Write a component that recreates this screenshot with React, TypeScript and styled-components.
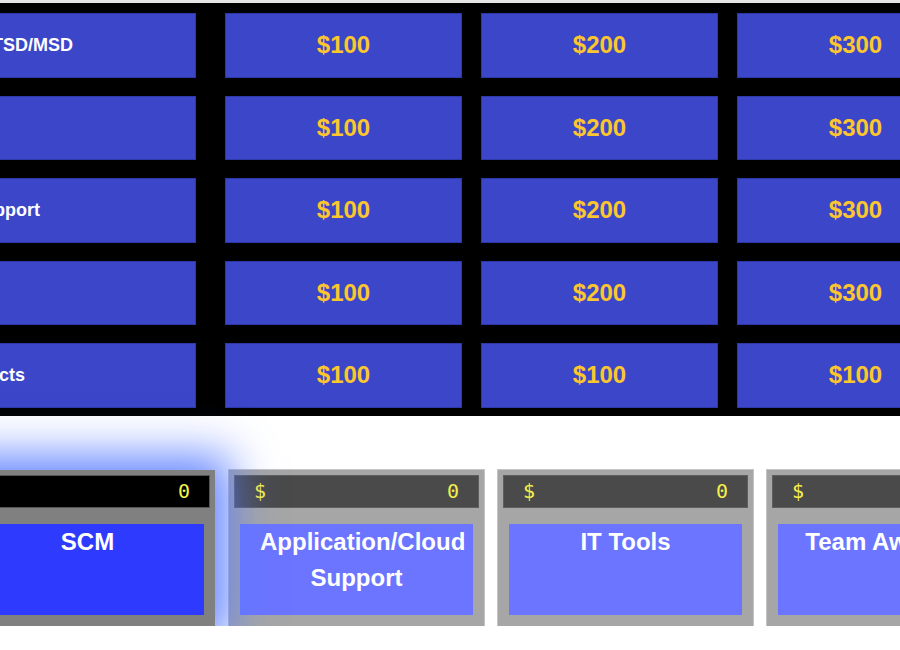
import React from "react";
import styled, { createGlobalStyle } from "styled-components";

const Global = createGlobalStyle`
  html, body {
    margin: 0;
    padding: 0;
    background: #ffffff;
    overflow: hidden;
  }
  body {
    font-family: "Liberation Sans", Arial, sans-serif;
  }
`;

const Page = styled.div`
  border-top: 3px solid #e6e6e6;
  margin-left: -41px;
  width: max-content;
`;

const Board = styled.div`
  display: grid;
  grid-template-columns: 247px repeat(5, 237px);
  grid-auto-rows: 64.5px;
  column-gap: 19px;
  row-gap: 18px;
  padding: 10px 20px 8px 0;
  background: #000000;
`;

const CellBase = styled.div`
  box-sizing: border-box;
  background: #3c46c8;
  border: 1px solid #2f38a8;
  display: flex;
  align-items: center;
  font-weight: bold;
  white-space: nowrap;
  overflow: hidden;
`;

const CategoryCell = styled(CellBase)`
  margin-right: 10px;
  padding-left: 11px;
  justify-content: flex-start;
  color: #ffffff;
  font-size: 18px;
`;

const ValueCell = styled(CellBase)`
  justify-content: center;
  color: #fcc72c;
  font-size: 24px;
`;

const Teams = styled.div`
  display: flex;
  gap: 14px;
  margin: 54px 0 0 1px;
`;

const TeamCard = styled.div<{ $active?: boolean }>`
  position: relative;
  z-index: ${(p) => (p.$active ? 1 : 0)};
  flex: 0 0 255px;
  width: 255px;
  min-width: 0;
  height: 156px;
  box-sizing: border-box;
  padding: 5px;
  display: flex;
  flex-direction: column;
  background: ${(p) => (p.$active ? "#808080" : "#a6a6a6")};
  box-shadow: ${(p) =>
    p.$active ? "0 0 42px 15px rgba(88, 124, 255, 0.92)" : "0 0 0 1px #c4c4c4"};
`;

const ScoreBar = styled.div<{ $active?: boolean }>`
  box-sizing: border-box;
  height: 33px;
  padding: 0 19px;
  display: flex;
  align-items: center;
  justify-content: space-between;
  background: ${(p) => (p.$active ? "#000000" : "#4a4a4a")};
  border: 1px solid ${(p) => (p.$active ? "#555555" : "#5e5e5e")};
  color: #f4f04a;
  font-family: "DejaVu Sans Mono", "Liberation Mono", monospace;
  font-size: 20px;
`;

const TeamName = styled.div<{ $active?: boolean }>`
  box-sizing: border-box;
  margin: 16px 6px 0;
  height: 91px;
  min-width: 0;
  padding: 0 20px;
  background: ${(p) => (p.$active ? "#2e3bff" : "#6b75ff")};
  color: #ffffff;
  font-size: 24px;
  font-weight: bold;
  line-height: 36px;
  text-align: center;
`;

const categories = ["IT TSD/MSD", "HR", "Support", "QA", "Edicts"];
const values = [
  ["$100", "$200", "$300", "$400", "$500"],
  ["$100", "$200", "$300", "$400", "$500"],
  ["$100", "$200", "$300", "$400", "$500"],
  ["$100", "$200", "$300", "$400", "$500"],
  ["$100", "$100", "$100", "$100", "$100"],
];

const teams = [
  { name: "SCM", score: 0, active: true },
  { name: "Application/Cloud Support", score: 0 },
  { name: "IT Tools", score: 0 },
  { name: "Team Awesome", score: 0 },
  { name: "Special Projects", score: 0 },
];

export default function App() {
  return (
    <>
      <Global />
      <Page>
        <Board>
          {categories.map((cat, r) => (
            <React.Fragment key={cat}>
              <CategoryCell>{cat}</CategoryCell>
              {values[r].map((v, c) => (
                <ValueCell key={c}>{v}</ValueCell>
              ))}
            </React.Fragment>
          ))}
        </Board>
        <Teams>
          {teams.map((t) => (
            <TeamCard key={t.name} $active={t.active}>
              <ScoreBar $active={t.active}>
                <span>$</span>
                <span>{t.score}</span>
              </ScoreBar>
              <TeamName $active={t.active}>{t.name}</TeamName>
            </TeamCard>
          ))}
        </Teams>
      </Page>
    </>
  );
}
